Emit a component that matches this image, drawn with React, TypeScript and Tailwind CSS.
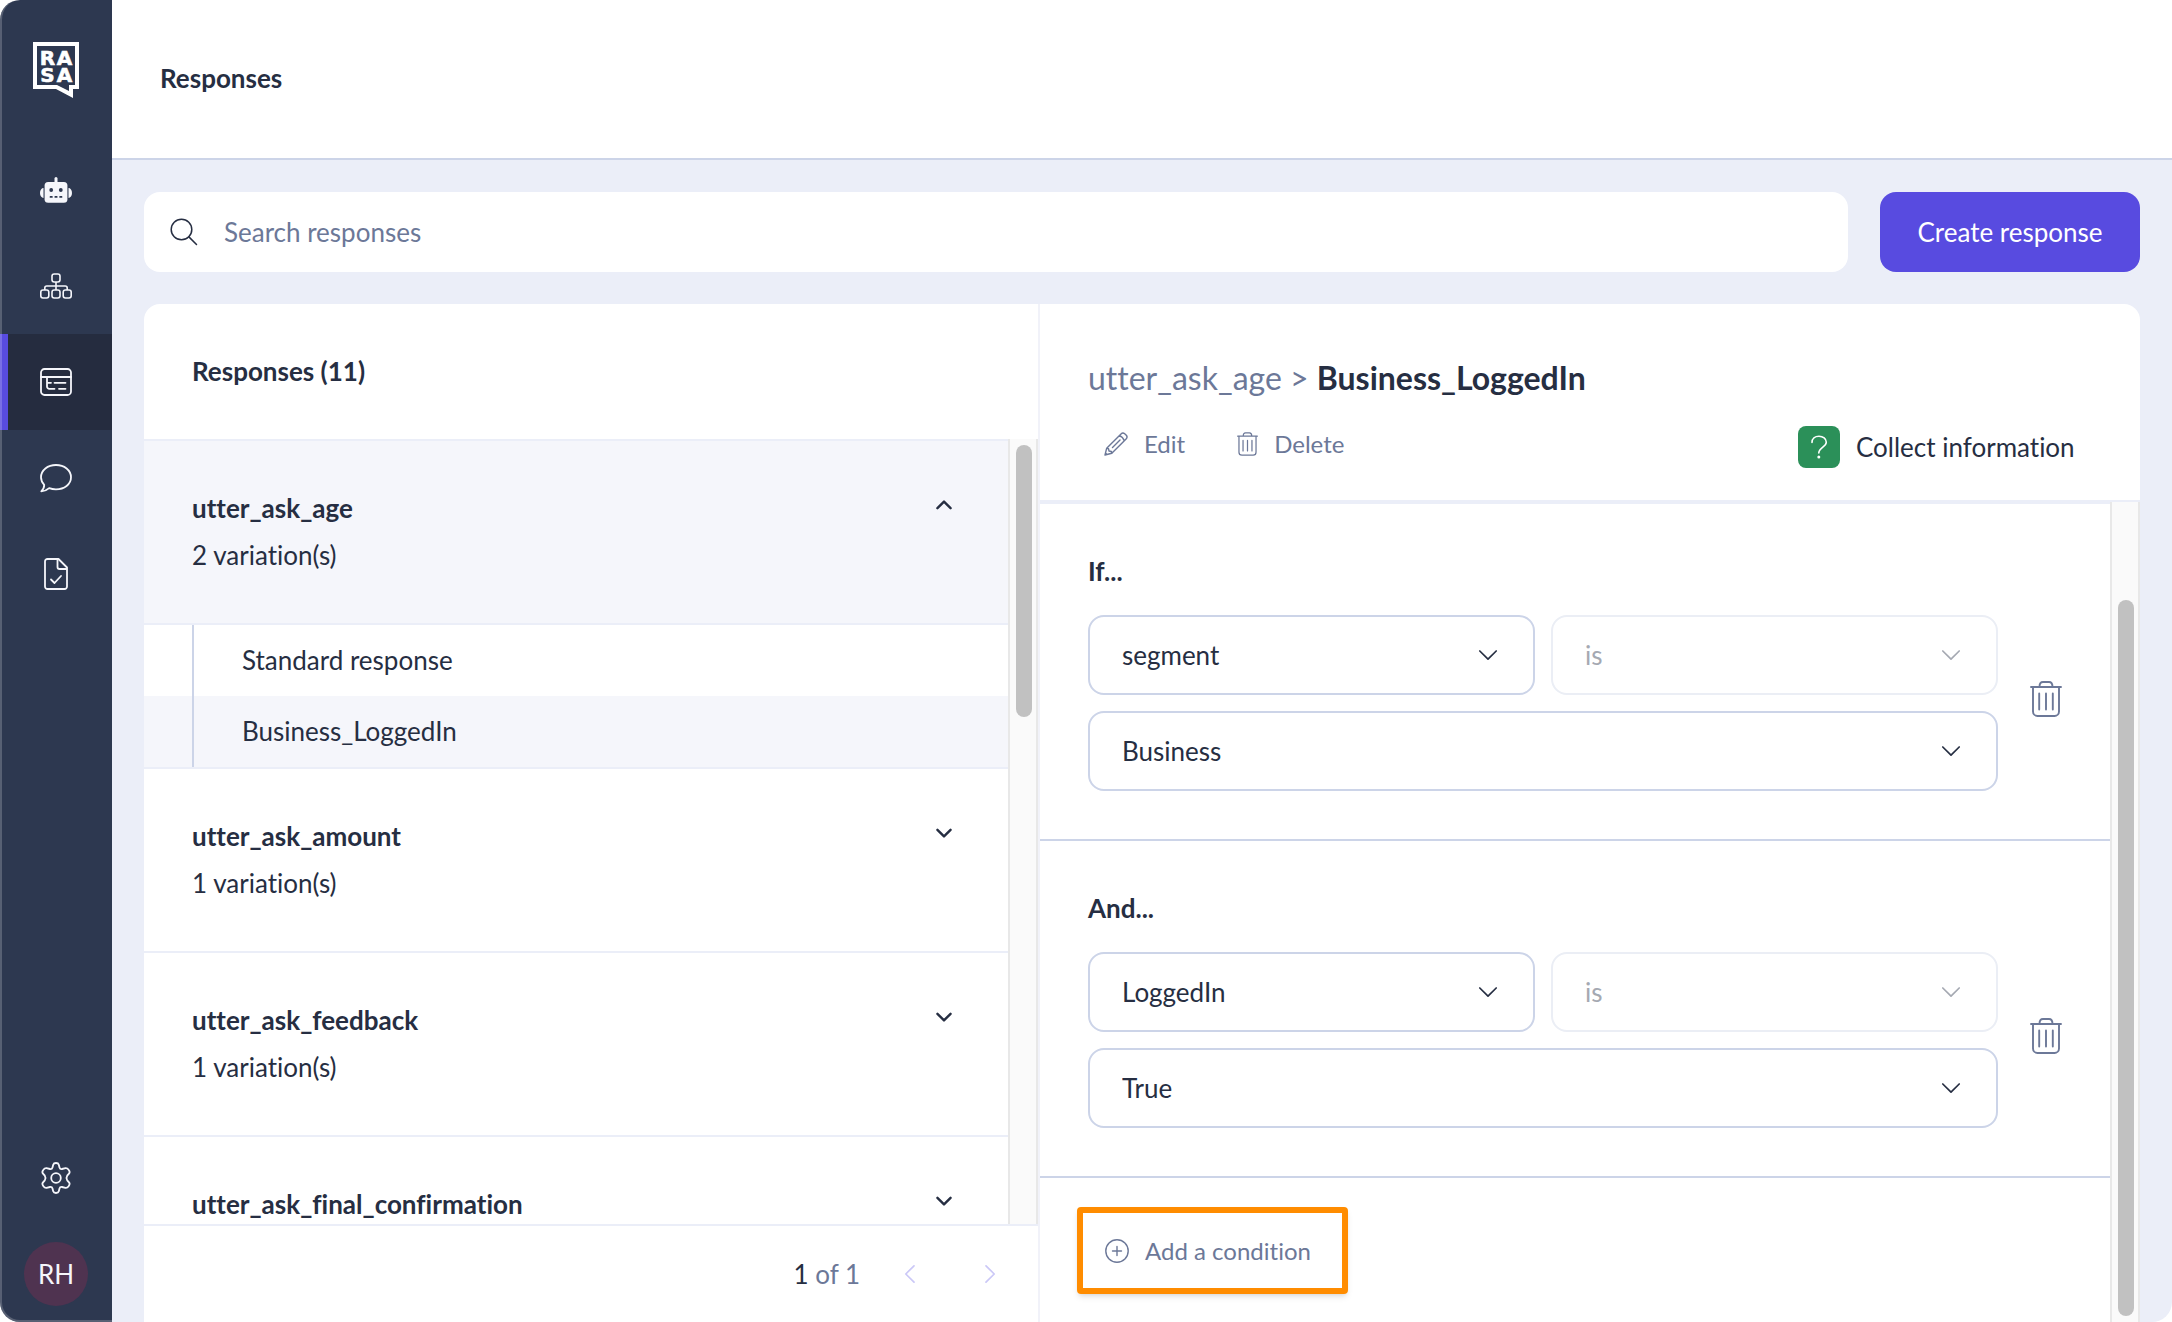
import { useState, type ReactNode } from 'react';

type IconProps = { className?: string };

function RasaLogo() {
  return (
    <svg viewBox="0 0 46 56" className="h-14 w-[46px]" role="img" aria-label="Rasa">
      <path fill="#fff" fillRule="evenodd" d="M0 0H46V47H40V56L23 47H0ZM4 4V43H24L36 49V43H42V4Z" />
      <g fill="#fff" stroke="#fff" strokeWidth="0.6" fontFamily="'DejaVu Sans', sans-serif" fontWeight="700" fontSize="20" textAnchor="middle">
        <text x="14.5" y="22.5">R</text>
        <text x="31.5" y="22.5">A</text>
        <text x="14.5" y="40">S</text>
        <text x="31.5" y="40">A</text>
      </g>
    </svg>
  );
}

function RobotIcon() {
  return (
    <svg viewBox="0 0 32 32" className="size-8" aria-hidden="true">
      <g fill="#f5f6fb">
        <rect x="14.5" y="3" width="3" height="7" rx="1.5" />
        <path d="M3.500 14V24A3.500 5 0 0 1 0 19A3.500 5 0 0 1 3.500 14ZM28.500 14V24A3.500 5 0 0 0 32 19A3.500 5 0 0 0 28.500 14Z" />
        <rect x="4.600" y="8" width="22.800" height="20.800" rx="3.500" />
      </g>
      <g fill="#2d3850">
        <circle cx="11.200" cy="16" r="1.900" />
        <circle cx="20.800" cy="16" r="1.900" />
        <rect x="9.700" y="22" width="3" height="1.800" rx=".5" />
        <rect x="14.500" y="22" width="3" height="1.800" rx=".5" />
        <rect x="19.300" y="22" width="3" height="1.800" rx=".5" />
      </g>
    </svg>
  );
}

function FlowIcon() {
  return (
    <svg viewBox="0 0 32 32" className="size-8" fill="none" stroke="#f5f6fb" strokeWidth="1.6" aria-hidden="true">
      <rect x="12" y="4" width="8" height="8" rx="2.2" />
      <rect x="0.8" y="20" width="8" height="8" rx="2.2" />
      <rect x="12" y="20" width="8" height="8" rx="2.2" />
      <rect x="23.200" y="20" width="8" height="8" rx="2.2" />
      <path d="M16 12V20M4.800 20V18a2 2 0 0 1 2-2H25.200a2 2 0 0 1 2 2v2" />
    </svg>
  );
}

function ResponsesIcon() {
  return (
    <svg viewBox="0 0 32 32" className="size-8" fill="none" stroke="#f5f6fb" strokeWidth="1.8" strokeLinecap="round" aria-hidden="true">
      <rect x="1" y="3" width="30" height="26" rx="3.500" />
      <path d="M1 11H31M7 11V20.500a2.300 2.300 0 0 0 2.300 2.300H14.500M7.500 16.800H11M14.500 16.800H25.500M19 22.800H25.500" />
    </svg>
  );
}

function ChatIcon() {
  return (
    <svg viewBox="0 0 32 32" className="size-8" fill="none" stroke="#f5f6fb" strokeWidth="1.800" strokeLinejoin="round" aria-hidden="true">
      <path d="M16 3C24.300 3 31 8.200 31 15.300S24.300 27.300 16 27.300C13.500 27.300 11.200 26.900 9.200 26.100C7 28 4.200 29.300 1.300 29.300C3.200 27.500 4.300 25 4.200 22.800C2.200 20.700 1 18.200 1 15.300C1 8.200 7.700 3 16 3Z" />
    </svg>
  );
}

function DocIcon() {
  return (
    <svg viewBox="0 0 32 32" className="size-8" fill="none" stroke="#f5f6fb" strokeWidth="1.800" strokeLinecap="round" strokeLinejoin="round" aria-hidden="true">
      <path d="M7.500 1H18.500L27 9.500V28.500a2.500 2.500 0 0 1-2.500 2.500H7.500A2.500 2.500 0 0 1 5 28.500V3.500A2.500 2.500 0 0 1 7.500 1Z" />
      <path d="M17.500 1.500V9a2 2 0 0 0 2 2H26.500M11 21.500L14.500 25L21 18" />
    </svg>
  );
}

function GearIcon() {
  return (
    <svg viewBox="0 0 32 32" className="size-8" fill="none" stroke="#f5f6fb" strokeWidth="1.800" strokeLinejoin="round" aria-hidden="true">
      <circle cx="16" cy="16" r="4.800" />
      <path d="M13.200 2.800Q13.700 1 16 1T18.800 2.800L19.500 5.500Q20 7.300 22 7L25.500 6.200Q27.300 6 28.600 7.800Q30.300 10 29.200 11.300L27.200 13.700Q25.700 16 27.200 18.300L29.200 20.700Q30.300 22 28.600 24.200Q27.300 26 25.500 25.800L22 25Q20 24.700 19.500 26.500L18.800 29.200Q18.300 31 16 31T13.200 29.200L12.500 26.500Q12 24.700 10 25L6.500 25.800Q4.700 26 3.400 24.200Q1.700 22 2.800 20.700L4.800 18.300Q6.300 16 4.800 13.700L2.800 11.300Q1.700 10 3.400 7.800Q4.700 6 6.500 6.200L10 7Q12 7.300 12.500 5.500Z" />
    </svg>
  );
}

function SearchIcon() {
  return (
    <svg viewBox="0 0 28 28" className="size-7" fill="none" stroke="#262e42" strokeWidth="1.500" strokeLinecap="round" aria-hidden="true">
      <circle cx="11.500" cy="11.500" r="10.300" />
      <path d="M18.900 18.900L26.500 26.500" />
    </svg>
  );
}

function PencilIcon() {
  return (
    <svg viewBox="0 0 24 24" className="size-6" fill="none" stroke="currentColor" strokeWidth="1.400" strokeLinejoin="round" strokeLinecap="round" aria-hidden="true">
      <path d="M1 23L2.700 16.200L17 1.900Q18.800 .1 20.700 1.700L22.300 3.300Q23.900 5.200 22.100 7L7.800 21.300ZM2.700 16.200L4.500 16.600L5 19L7.400 19.500L7.800 21.300M15.200 3.700Q19 5 20.300 8.800M8.500 15.500L16 8M1.500 21L3 22.500" />
    </svg>
  );
}

function TrashIcon({ className = '' }: IconProps) {
  return (
    <svg viewBox="0 0 32 36" className={className} fill="none" stroke="currentColor" strokeWidth="1.900" strokeLinecap="round" strokeLinejoin="round" aria-hidden="true">
      <path d="M1 6H31M9.500 6Q9.500 1 13 1H19Q22.500 1 22.500 6M3 6V30.500a4.500 4.500 0 0 0 4.500 4.500H24.500a4.500 4.500 0 0 0 4.500-4.500V6M9.200 12.500V28.500M16 12.500V28.500M22.800 12.500V28.500" />
    </svg>
  );
}

function PlusCircleIcon() {
  return (
    <svg viewBox="0 0 24 24" className="size-6" fill="none" stroke="currentColor" strokeWidth="1.400" strokeLinecap="round" aria-hidden="true">
      <circle cx="12" cy="12" r="11.200" />
      <path d="M12 7.500V16.500M7.500 12H16.500" />
    </svg>
  );
}

function Chevron({ className = '' }: IconProps) {
  return (
    <svg viewBox="0 0 20 20" className={className} fill="none" stroke="currentColor" strokeLinecap="round" strokeLinejoin="round" aria-hidden="true">
      <path d="M1.800 6L10 14.200L18.200 6" />
    </svg>
  );
}

function QuestionIcon() {
  return (
    <svg viewBox="0 0 42 42" className="size-[42px]" aria-hidden="true">
      <rect width="42" height="42" rx="8" fill="#2b9059" />
      <path d="M14 16.500C14 12.500 17 10.200 21 10.200S28.300 12.800 28.300 16.200C28.300 20.800 20.800 21.500 20.800 27" fill="none" stroke="#fff" strokeWidth="1.600" strokeLinecap="round" />
      <circle cx="20.800" cy="31" r="1.500" fill="#fff" />
    </svg>
  );
}

function NavItem({ label, active = false, children }: { label: string; active?: boolean; children: ReactNode }) {
  return (
    <a
      href="#"
      aria-label={label}
      aria-current={active ? 'page' : undefined}
      className={
        active
          ? 'flex h-24 items-center justify-center border-l-8 border-[#584be0] bg-[#252c3f] pr-2'
          : 'flex h-24 items-center justify-center'
      }
    >
      {children}
    </a>
  );
}

function Sidebar() {
  return (
    <nav aria-label="Main" className="relative flex w-28 shrink-0 flex-col overflow-hidden rounded-l-[20px] bg-[#2d3850]">
      <div className="flex h-[142px] justify-center pt-[42px]">
        <RasaLogo />
      </div>
      <NavItem label="Assistant"><RobotIcon /></NavItem>
      <NavItem label="Flows"><FlowIcon /></NavItem>
      <NavItem label="Responses" active><ResponsesIcon /></NavItem>
      <NavItem label="Conversations"><ChatIcon /></NavItem>
      <NavItem label="Tests"><DocIcon /></NavItem>
      <div className="mt-auto">
        <NavItem label="Settings"><GearIcon /></NavItem>
        <div className="flex h-24 items-center justify-center">
          <button type="button" className="size-16 rounded-full bg-[#4f3350] text-[26px] text-[#f5f6fb]">RH</button>
        </div>
      </div>
      <span className="pointer-events-none absolute inset-0 rounded-l-[20px] border-b-2 border-l-2 border-white/20" />
    </nav>
  );
}

type ResponseGroup = { name: string; count: number; items?: string[] };

const groups: ResponseGroup[] = [
  { name: 'utter_ask_age', count: 2, items: ['Standard response', 'Business_LoggedIn'] },
  { name: 'utter_ask_amount', count: 1 },
  { name: 'utter_ask_feedback', count: 1 },
  { name: 'utter_ask_final_confirmation', count: 1 },
];

function ResponseRow({ group }: { group: ResponseGroup }) {
  const open = Boolean(group.items);
  return (
    <li className="shrink-0">
      <button
        type="button"
        aria-expanded={open}
        className={
          open
            ? 'flex h-[184px] w-full items-start justify-between border-b-2 border-[#ebeef8] bg-[#f5f6fb] pt-11 pr-14 pl-12 text-left'
            : 'flex h-[184px] w-full items-start justify-between border-b-2 border-[#ebeef8] pt-11 pr-14 pl-12 text-left'
        }
      >
        <span className="leading-[47px]">
          <span className="block font-bold">{group.name}</span>
          <span className="block">{group.count} variation(s)</span>
        </span>
        <Chevron className={open ? 'mt-3 size-4 rotate-180 stroke-3' : 'mt-3 size-4 stroke-3'} />
      </button>
      {group.items && (
        <ul className="border-b-2 border-[#ebeef8]">
          {group.items.map((item, i) => (
            <li key={item} className={i === 1 ? 'bg-[#f5f6fb] pl-12' : 'pl-12'}>
              <a href="#" className="block border-l-2 border-[#ccd4e8] pl-12 leading-[71px]">{item}</a>
            </li>
          ))}
        </ul>
      )}
    </li>
  );
}

function ListPanel() {
  return (
    <section className="flex w-[896px] shrink-0 flex-col border-r-2 border-[#f1f2f9]">
      <h2 className="h-[135px] shrink-0 pl-12 text-[26px] leading-[135px] font-bold">Responses (11)</h2>
      <div className="flex min-h-0 flex-1">
        <ul className="flex min-w-0 flex-1 flex-col overflow-hidden border-t-2 border-[#ebeef8]">
          {groups.map((g) => <ResponseRow key={g.name} group={g} />)}
        </ul>
        <div className="w-[30px] border-x-2 border-[#e8e8e8] bg-[#fafafa] px-[6px] pt-[6px]">
          <div className="h-[272px] w-4 rounded-full bg-[#c1c1c1]" />
        </div>
      </div>
      <div className="flex h-[98px] shrink-0 items-center justify-end border-t-2 border-[#ebeef8] pr-[38px]">
        <p className="text-[#6c7898]"><span className="text-[#262e42]">1</span> of 1</p>
        <button type="button" aria-label="Previous page" className="ml-10 text-[#cbc8f7]">
          <Chevron className="size-5 rotate-90 stroke-[1.7]" />
        </button>
        <button type="button" aria-label="Next page" className="ml-15 text-[#cbc8f7]">
          <Chevron className="size-5 -rotate-90 stroke-[1.7]" />
        </button>
      </div>
    </section>
  );
}

function SelectBox({ label, options, disabled = false }: { label: string; options: string[]; disabled?: boolean }) {
  const [value, setValue] = useState(options[0]);
  return (
    <div className="relative min-w-0 flex-1">
      <select
        aria-label={label}
        value={value}
        disabled={disabled}
        onChange={(e) => setValue(e.target.value)}
        className="block h-20 w-full appearance-none rounded-2xl border-2 border-[#ccd4e8] bg-white px-8 text-[#262e42] disabled:border-[#ebeef5] disabled:text-[#a5a9b2] disabled:opacity-100"
      >
        {options.map((o) => <option key={o}>{o}</option>)}
      </select>
      <Chevron
        className={
          disabled
            ? 'pointer-events-none absolute top-[30px] right-[37px] size-5 stroke-[1.7] text-[#a5a9b2]'
            : 'pointer-events-none absolute top-[30px] right-[37px] size-5 stroke-[1.7]'
        }
      />
    </div>
  );
}

function Condition({ title, slots, values }: { title: string; slots: string[]; values: string[] }) {
  return (
    <fieldset className="border-b-2 border-[#ccd4e8] pr-12 pb-12 pl-12">
      <legend className="pt-[51px] leading-8 font-bold">{title}</legend>
      <div className="mt-7 flex items-center">
        <div className="flex min-w-0 flex-1 flex-col gap-4">
          <div className="flex gap-4">
            <SelectBox label={`${title} slot`} options={slots} />
            <SelectBox label={`${title} operator`} options={['is']} disabled />
          </div>
          <div className="flex">
            <SelectBox label={`${title} value`} options={values} />
          </div>
        </div>
        <button type="button" aria-label="Delete condition" className="mb-2 ml-8 text-[#6c7898]">
          <TrashIcon className="h-9 w-8" />
        </button>
      </div>
    </fieldset>
  );
}

function DetailPanel() {
  return (
    <section className="flex min-w-0 flex-1 flex-col">
      <header className="flex h-[198px] shrink-0 items-end justify-between border-b-2 border-[#ebeef8] px-12">
        <div className="pb-9 text-[#6c7898]">
          <h2 className="text-[32px] leading-10">
            utter_ask_age &gt; <strong className="font-bold text-[#262e42]">Business_LoggedIn</strong>
          </h2>
          <div className="mt-[26px] flex h-10 gap-[52px] pl-4 text-[24px]">
            <button type="button" className="flex items-center gap-4"><PencilIcon />Edit</button>
            <button type="button" className="flex items-center gap-4"><TrashIcon className="h-6 w-[21px]" />Delete</button>
          </div>
        </div>
        <p className="flex w-[294px] items-center gap-4 pb-8"><QuestionIcon />Collect information</p>
      </header>
      <div className="flex min-h-0 flex-1">
        <div className="min-w-0 flex-1 overflow-hidden border-t-2 border-[#ebeef8]">
          <Condition title="If..." slots={['segment', 'LoggedIn']} values={['Business', 'Private']} />
          <Condition title="And..." slots={['LoggedIn', 'segment']} values={['True', 'False']} />
          <button
            type="button"
            className="mt-[29px] ml-[37px] flex h-[87px] w-[271px] items-center gap-4 rounded-sm border-6 border-[#ff8c00] pl-[22px] text-[24px] text-[#6c7898] shadow-md"
          >
            <PlusCircleIcon />Add a condition
          </button>
        </div>
        <div className="flex w-[30px] flex-col border-x-2 border-[#e8e8e8] bg-[#fafafa] px-[6px] pt-[98px] pb-[6px]">
          <div className="w-4 flex-1 rounded-full bg-[#c1c1c1]" />
        </div>
      </div>
    </section>
  );
}

export default function App() {
  return (
    <div className="flex h-screen min-h-[900px] bg-white font-['Lato',sans-serif] text-[26px] text-[#262e42] [font-variant-ligatures:none]">
      <Sidebar />
      <div className="flex min-w-0 flex-1 flex-col overflow-hidden rounded-br-[20px] bg-[#ebeef8]">
        <header className="h-40 shrink-0 border-b-2 border-[#ccd4e8] bg-white px-12">
          <h1 className="leading-[157px] font-bold">Responses</h1>
        </header>
        <main className="flex min-h-0 flex-1 flex-col gap-8 px-8 pt-8">
          <div className="flex gap-8">
            <div className="flex h-20 min-w-0 flex-1 items-center gap-[26px] rounded-2xl bg-white px-[26px]">
              <SearchIcon />
              <input
                type="search"
                aria-label="Search responses"
                placeholder="Search responses"
                className="h-full min-w-0 flex-1 bg-transparent outline-none placeholder:text-[#6c7898]"
              />
            </div>
            <button type="button" className="h-20 w-[260px] rounded-2xl bg-[#584be0] text-white">Create response</button>
          </div>
          <div className="flex min-h-0 flex-1 overflow-hidden rounded-t-2xl bg-white">
            <ListPanel />
            <DetailPanel />
          </div>
        </main>
      </div>
    </div>
  );
}
